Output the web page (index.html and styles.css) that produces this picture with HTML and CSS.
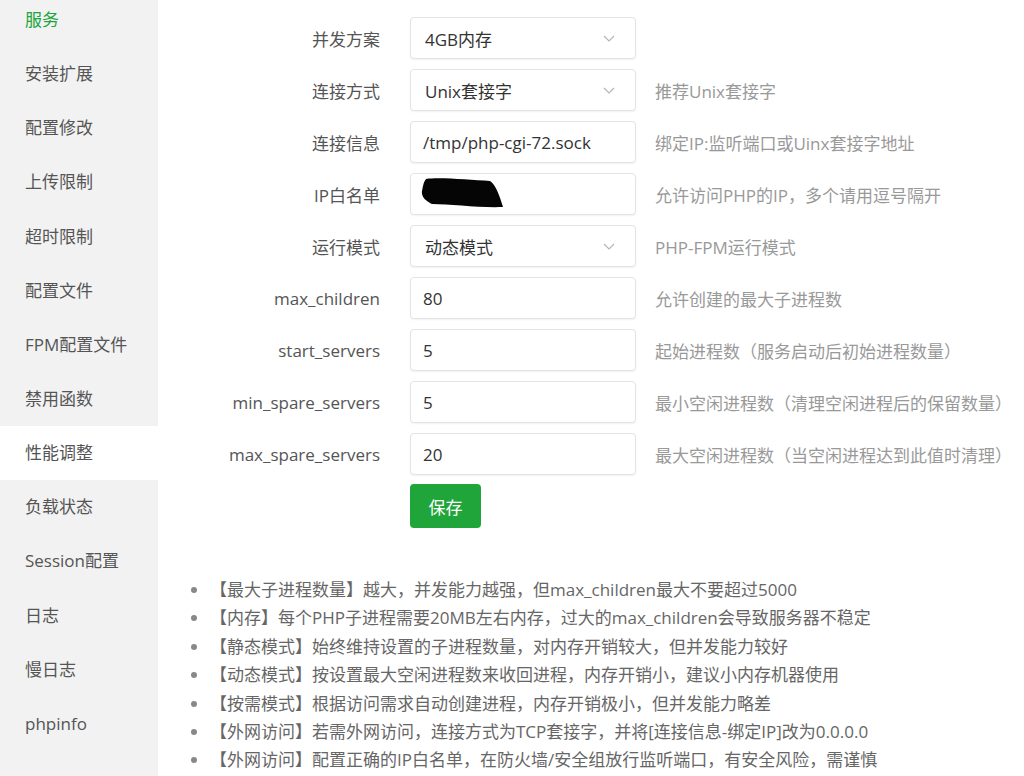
FILE: index.html
```html
<!DOCTYPE html>
<html lang="zh-CN">
<head>
    <meta charset="UTF-8">
    <meta name="viewport" content="width=device-width, initial-scale=1.0">
    <title>PHP 设置 - 性能调整</title>
    <link rel="stylesheet" href="styles.css">
</head>
<body>
    <div class="layout">
        <!-- Sidebar -->
        <aside class="sidebar">
            <ul class="menu">
                <li class="menu-item current">服务</li>
                <li class="menu-item">安装扩展</li>
                <li class="menu-item">配置修改</li>
                <li class="menu-item">上传限制</li>
                <li class="menu-item">超时限制</li>
                <li class="menu-item">配置文件</li>
                <li class="menu-item">FPM配置文件</li>
                <li class="menu-item">禁用函数</li>
                <li class="menu-item active">性能调整</li>
                <li class="menu-item">负载状态</li>
                <li class="menu-item">Session配置</li>
                <li class="menu-item">日志</li>
                <li class="menu-item">慢日志</li>
                <li class="menu-item">phpinfo</li>
            </ul>
        </aside>

        <!-- Main Content -->
        <main class="main">
            <form class="settings">
                <div class="row">
                    <label class="label">并发方案</label>
                    <div class="select">
                        <span>4GB内存</span>
                        <svg class="chevron" viewBox="0 0 12 7"><path d="M1 1l5 5 5-5"/></svg>
                    </div>
                </div>
                <div class="row">
                    <label class="label">连接方式</label>
                    <div class="select">
                        <span>Unix套接字</span>
                        <svg class="chevron" viewBox="0 0 12 7"><path d="M1 1l5 5 5-5"/></svg>
                    </div>
                    <span class="help">推荐Unix套接字</span>
                </div>
                <div class="row">
                    <label class="label">连接信息</label>
                    <input class="field" type="text" value="/tmp/php-cgi-72.sock">
                    <span class="help">绑定IP:监听端口或Uinx套接字地址</span>
                </div>
                <div class="row">
                    <label class="label">IP白名单</label>
                    <div class="field-wrap">
                        <input class="field" type="text" value="">
                        <svg class="redact" viewBox="0 0 84 34"><path d="M6 2 C20 0 50 3 70 4 C76 8 80 20 83 30 C60 31 30 27 12 27 C6 24 1 20 2 14 C3 8 4 4 6 2Z"/></svg>
                    </div>
                    <span class="help">允许访问PHP的IP，多个请用逗号隔开</span>
                </div>
                <div class="row">
                    <label class="label">运行模式</label>
                    <div class="select">
                        <span>动态模式</span>
                        <svg class="chevron" viewBox="0 0 12 7"><path d="M1 1l5 5 5-5"/></svg>
                    </div>
                    <span class="help">PHP-FPM运行模式</span>
                </div>
                <div class="row">
                    <label class="label">max_children</label>
                    <input class="field" type="text" value="80">
                    <span class="help">允许创建的最大子进程数</span>
                </div>
                <div class="row">
                    <label class="label">start_servers</label>
                    <input class="field" type="text" value="5">
                    <span class="help">起始进程数（服务启动后初始进程数量）</span>
                </div>
                <div class="row">
                    <label class="label">min_spare_servers</label>
                    <input class="field" type="text" value="5">
                    <span class="help">最小空闲进程数（清理空闲进程后的保留数量）</span>
                </div>
                <div class="row">
                    <label class="label">max_spare_servers</label>
                    <input class="field" type="text" value="20">
                    <span class="help">最大空闲进程数（当空闲进程达到此值时清理）</span>
                </div>
                <div class="row">
                    <span class="label"></span>
                    <button type="submit" class="btn-save">保存</button>
                </div>
            </form>

            <!-- Tips -->
            <ul class="notes">
                <li>【最大子进程数量】越大，并发能力越强，但max_children最大不要超过5000</li>
                <li>【内存】每个PHP子进程需要20MB左右内存，过大的max_children会导致服务器不稳定</li>
                <li>【静态模式】始终维持设置的子进程数量，对内存开销较大，但并发能力较好</li>
                <li>【动态模式】按设置最大空闲进程数来收回进程，内存开销小，建议小内存机器使用</li>
                <li>【按需模式】根据访问需求自动创建进程，内存开销极小，但并发能力略差</li>
                <li>【外网访问】若需外网访问，连接方式为TCP套接字，并将[连接信息-绑定IP]改为0.0.0.0</li>
                <li>【外网访问】配置正确的IP白名单，在防火墙/安全组放行监听端口，有安全风险，需谨慎</li>
            </ul>
        </main>
    </div>
</body>
</html>
```

FILE: styles.css
```css
:root {
    --green: #20a53a;
    --text-color: #555;
    --muted-color: #999;
    --border-color: #e4e4e4;
    --sidebar-bg: #f2f2f2;
    --font-family: "Open Sans", "Noto Sans CJK SC", sans-serif;
}

html, body {
    height: 100%;
}

body {
    margin: 0;
    overflow: hidden;
    background-color: white;
    font-family: var(--font-family);
    font-size: 17px;
    color: var(--text-color);
}

.layout {
    display: flex;
    min-height: 100%;
}

/* Sidebar */
.sidebar {
    width: 158px;
    flex-shrink: 0;
    background-color: var(--sidebar-bg);
}

.menu {
    list-style: none;
    margin: -7px 0 0;
    padding: 0;
}

.menu-item {
    height: 54.15px;
    line-height: 54.15px;
    padding-left: 25px;
    color: var(--text-color);
}

.menu-item.current {
    color: var(--green);
}

.menu-item.active {
    background-color: white;
}

/* Form */
.main {
    flex: 1;
    padding: 17px 0 0 22px;
}

.settings {
    display: flex;
    flex-direction: column;
    gap: 10px;
}

.row {
    display: flex;
    align-items: center;
}

.label {
    width: 200px;
    text-align: right;
    margin-right: 30px;
    color: var(--text-color);
}

.field,
.select {
    box-sizing: border-box;
    width: 226px;
    height: 42px;
    border: 1px solid var(--border-color);
    border-radius: 4px;
    box-shadow: 0 1px 2px rgba(0, 0, 0, 0.06);
    background-color: white;
    font-family: var(--font-family);
    font-size: 17px;
    color: #333;
}

.field {
    padding: 0 12px;
    outline: none;
}

.select {
    position: relative;
    display: flex;
    align-items: center;
    padding: 0 14px;
}

.chevron {
    position: absolute;
    right: 20px;
    top: 17px;
    width: 12px;
    height: 7px;
    fill: none;
    stroke: #b5b5b5;
    stroke-width: 1.2;
}

.field-wrap {
    position: relative;
    height: 42px;
}

.redact {
    position: absolute;
    left: 10px;
    top: 4px;
    width: 84px;
    height: 34px;
    fill: #050505;
    filter: blur(0.6px);
}

.help {
    margin-left: 19px;
    color: var(--muted-color);
}

.btn-save {
    width: 71px;
    height: 44px;
    margin-top: -1px;
    border: none;
    border-radius: 4px;
    background-color: var(--green);
    color: white;
    font-family: var(--font-family);
    font-size: 17px;
    cursor: pointer;
}

.btn-save:hover {
    opacity: 0.9;
}

/* Tips */
.notes {
    margin: 48px 0 0;
    padding-left: 30px;
    color: #666;
    line-height: 28.4px;
}

.notes li::marker {
    color: #888;
}
```
